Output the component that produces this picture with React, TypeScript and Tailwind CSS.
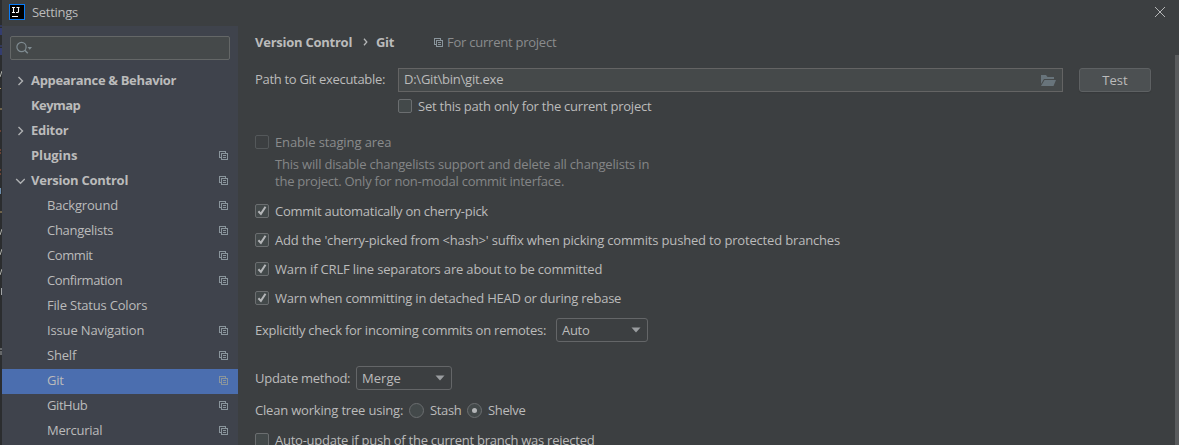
import type { ReactNode } from "react";

function CopyIcon({ className = "" }: { className?: string }) {
  return (
    <svg width="9" height="9" viewBox="0 0 9 9" fill="none" stroke="#8a959c" className={`shrink-0 ${className}`} shapeRendering="crispEdges">
      <path d="M2 6.5H.5V.5h6V2" />
      <rect x="2.5" y="2.5" width="6" height="6" />
      <path d="M4 4.5h3M4 6.5h3" />
    </svg>
  );
}

function Chevron({ open }: { open?: boolean }) {
  return (
    <svg width="10" height="10" viewBox="0 0 10 10" fill="none" stroke="#afb1b3" strokeWidth="1.4" className="relative -top-px">
      <path d={open ? "M1.2 3l4.3 4.200L9.800 3" : "M5 1l4 4-4 4"} transform={open ? undefined : "translate(-1.5 0)"} />
    </svg>
  );
}

type Row = { label: string; track: string; level?: number; arrow?: "open" | "closed"; copy?: boolean; selected?: boolean };

const rows: Row[] = [
  { label: "Appearance & Behavior", track: "tracking-[-0.34px]", arrow: "closed" },
  { label: "Keymap", track: "tracking-[-0.55px]" },
  { label: "Editor", track: "tracking-[-0.3px]", arrow: "closed" },
  { label: "Plugins", track: "tracking-[-0.1px]", copy: true },
  { label: "Version Control", track: "tracking-[-0.25px]", arrow: "open", copy: true },
  { label: "Background", track: "tracking-[-0.18px]", level: 1, copy: true },
  { label: "Changelists", track: "tracking-[-0.28px]", level: 1, copy: true },
  { label: "Commit", track: "tracking-[-0.42px]", level: 1, copy: true },
  { label: "Confirmation", track: "tracking-[-0.39px]", level: 1, copy: true },
  { label: "File Status Colors", track: "tracking-[-0.2px]", level: 1 },
  { label: "Issue Navigation", track: "tracking-[-0.14px]", level: 1, copy: true },
  { label: "Shelf", track: "tracking-[-0.2px]", level: 1, copy: true },
  { label: "Git", track: "tracking-[-0.3px]", level: 1, copy: true, selected: true },
  { label: "GitHub", track: "tracking-[-0.42px]", level: 1, copy: true },
  { label: "Mercurial", track: "tracking-[-0.25px]", level: 1, copy: true },
];

function TreeRow({ row }: { row: Row }) {
  return (
    <div className={`flex h-[25px] shrink-0 items-center pr-[10px] ${row.selected ? "bg-[#4b6eaf]" : ""}`}>
      <div className={`flex shrink-0 items-center pl-[13px] ${row.level ? "w-[45px]" : "w-[29px]"}`}>
        {row.arrow && <Chevron open={row.arrow === "open"} />}
      </div>
      <span className={`relative -top-px flex-1 ${row.track} ${row.level ? "" : "font-bold"}`}>{row.label}</span>
      {row.copy && <CopyIcon className="relative -top-px" />}
    </div>
  );
}

function Box({ checked, disabled }: { checked?: boolean; disabled?: boolean }) {
  return (
    <span className={`flex size-[14px] shrink-0 items-center justify-center rounded-[2px] border ${disabled ? "border-[#54585a]" : "border-[#6b6e70] bg-[#43494a]"}`}>
      {checked && (
        <svg width="12" height="12" viewBox="0 0 12 12" fill="none" stroke="#b4b6b8" strokeWidth="2">
          <path d="M2.4 6.2l2.5 2.7 4.6-7.2" />
        </svg>
      )}
    </span>
  );
}

function Check({ children, className, checked, disabled }: { children: ReactNode; className: string; checked?: boolean; disabled?: boolean }) {
  return (
    <div className={`flex h-[14px] shrink-0 items-center gap-[6px] ${disabled ? "text-[#8a8c8d]" : ""} ${className}`}>
      <Box checked={checked} disabled={disabled} />
      <span>{children}</span>
    </div>
  );
}

function Select({ value, className }: { value: string; className: string }) {
  return (
    <div className={`flex h-6 items-center justify-between rounded-[3px] border border-[#646668] pr-[6px] pl-[5px] ${className}`}>
      <span>{value}</span>
      <svg width="10" height="6" viewBox="0 0 10 6" fill="#9a9da0"><path d="M.5 .5h9L5 5.500z" /></svg>
    </div>
  );
}

function Radio({ on, className = "" }: { on?: boolean; className?: string }) {
  return (
    <span className={`flex size-[15px] shrink-0 items-center justify-center rounded-full border border-[#6b6e70] bg-[#43494a] ${className}`}>
      {on && <span className="size-[5px] rounded-full bg-[#b4b6b8]" />}
    </span>
  );
}

function EditorEdge() {
  return (
    <svg width="2" height="445" viewBox="0 0 2 445" className="shrink-0 bg-[#2b2d2f]">
      <path d="M0 26h2M0 46h2" stroke="#3c4685" />
      <path d="M1 28v7M1 48v7" stroke="#343d70" strokeWidth="2" />
      <path d="M0 77l2-6M0 235l2-6M0 255l2-6M0 275l2-6" stroke="#a8aaa5" />
      <path d="M0 88.500h1M0 109h2M0 212h2" stroke="#b39a68" />
      <path d="M0 131h1M0 150h1M0 153h1M0 170h1M0 174h1" stroke="#a85b3f" />
      <path d="M.5 188v6" stroke="#6e8fae" />
      <path d="M1.500 288v7M0 349h2M0 352h2M0 354h2" stroke="#a1a4a6" />
    </svg>
  );
}

export default function App() {
  return (
    <div className="flex h-[445px] w-[1179px] overflow-hidden bg-[#3c3f41] font-['Open_Sans','Noto_Sans',sans-serif] text-[13px] leading-[17px] whitespace-nowrap text-[#bbbbbb]">
      <EditorEdge />
      <div className="flex min-w-0 flex-1 flex-col">
        <header className="flex h-[26px] shrink-0 items-center pr-[14px] pb-[2px] pl-[7px]">
          <svg width="16" height="16" viewBox="0 0 16 16">
            <rect width="16" height="16" fill="#087cfa" />
            <rect x="1" y="1" width="14" height="14" fill="#000" />
            <path d="M3 3.500h3M4.500 3v5M3 8.500h3M7.500 3.500h3M9.500 3v4.500q0 1-1 1H7" fill="none" stroke="#fff" strokeWidth="1.100" />
            <path d="M3 12.500h6" stroke="#fff" />
          </svg>
          <span className="ml-[7px] flex-1 tracking-[-0.3px]">Settings</span>
          <svg width="10" height="10" viewBox="0 0 10 10" stroke="#b4b6b7">
            <path d="M0 0l10 10M10 0L0 10" />
          </svg>
        </header>
        <div className="flex min-h-0 flex-1">
          <aside className="flex w-[236px] shrink-0 flex-col overflow-hidden bg-[#3f434c]">
            <div className="mx-2 mt-[10px] mb-[9px] flex h-6 shrink-0 items-center rounded-[2px] border border-[#646767] bg-[#45494a] pl-[5px]">
              <svg width="17" height="14" viewBox="0 0 17 14" fill="none" stroke="#7f8b91" strokeWidth="1.200">
                <circle cx="5.500" cy="6" r="4.600" />
                <path d="M8.800 9.300l3 3" strokeWidth="1.500" />
                <path d="M11.500 6h4.500l-2.250 2.800z" fill="#7f8b91" stroke="none" />
              </svg>
            </div>
            {rows.map((r) => <TreeRow key={r.label} row={r} />)}
          </aside>
          <main className="flex min-w-0 flex-1 flex-col overflow-hidden pl-[17px]">
            <div className="flex h-[34px] shrink-0 items-center pb-[2px]">
              <span className="w-[108px] font-bold tracking-[-0.25px]">Version Control</span>
              <svg width="5" height="8" viewBox="0 0 5 8" fill="none" stroke="#b4b6b7" strokeWidth="1.300"><path d="M1 .8L3.800 4 1 7.200" /></svg>
              <span className="ml-2 w-[58px] font-bold tracking-[-0.3px]">Git</span>
              <CopyIcon className="relative top-[0.5px]" />
              <span className="ml-1 tracking-[-0.24px] text-[#8a8c8d]">For current project</span>
            </div>
            <div className="mt-2 flex h-6 shrink-0 items-center">
              <span className="w-[143px] pb-[2px] tracking-[-0.3px]">Path to Git executable:</span>
              <div className="flex h-6 w-[665px] items-center justify-between border border-[#646464] bg-[#45494a] pr-[6px] pl-[5px]">
                <span className="pb-px tracking-[-0.24px]">D:\Git\bin\git.exe</span>
                <svg width="15" height="11" viewBox="0 0 15 11" fill="#68747b">
                  <path d="M0 0h5l1.500 2H13v2H3L0 9z" />
                  <path d="M3.500 5H15l-2.500 6H0z" />
                </svg>
              </div>
              <button className="ml-4 h-6 w-[72px] rounded-[3px] border border-[#5e6163] bg-[#4c5052] shadow-[0_1px_1px_#36393b]">Test</button>
            </div>
            <Check className="mt-[7px] ml-[143px] tracking-[-0.225px]">Set this path only for the current project</Check>
            <Check disabled className="mt-[22px] tracking-[-0.1px]">Enable staging area</Check>
            <p className="mt-[7px] ml-5 shrink-0 text-[#848687]">
              <span className="block tracking-[-0.185px]">This will disable changelists support and delete all changelists in</span>
              <span className="block tracking-[-0.24px]">the project. Only for non-modal commit interface.</span>
            </p>
            <Check checked className="mt-[14px] tracking-[-0.27px]">Commit automatically on cherry-pick</Check>
            <Check checked className="mt-[15px] tracking-[-0.17px]">Add the 'cherry-picked from &lt;hash&gt;' suffix when picking commits pushed to protected branches</Check>
            <Check checked className="mt-[15px] tracking-[-0.17px]">Warn if CRLF line separators are about to be committed</Check>
            <Check checked className="mt-[15px] tracking-[-0.22px]">Warn when committing in detached HEAD or during rebase</Check>
            <div className="mt-[13px] flex h-6 shrink-0 items-center">
              <span className="w-[301px] tracking-[-0.23px]">Explicitly check for incoming commits on remotes:</span>
              <Select value="Auto" className="w-[92px] tracking-[-0.3px]" />
            </div>
            <div className="mt-6 flex h-6 shrink-0 items-center">
              <span className="w-[101px] tracking-[-0.27px]">Update method:</span>
              <Select value="Merge" className="w-24 tracking-[0.05px]" />
            </div>
            <div className="mt-[13px] flex h-[15px] shrink-0 items-center">
              <span className="w-[154px] tracking-[-0.19px]">Clean working tree using:</span>
              <Radio />
              <span className="ml-[6px] w-[37px] tracking-[-0.35px]">Stash</span>
              <Radio on />
              <span className="ml-[6px] tracking-[-0.35px]">Shelve</span>
            </div>
            <Check className="mt-[15px] tracking-[-0.25px]">Auto-update if push of the current branch was rejected</Check>
          </main>
          <div className="mt-[29px] w-1 shrink-0 bg-[#595b5d]" />
        </div>
      </div>
    </div>
  );
}
